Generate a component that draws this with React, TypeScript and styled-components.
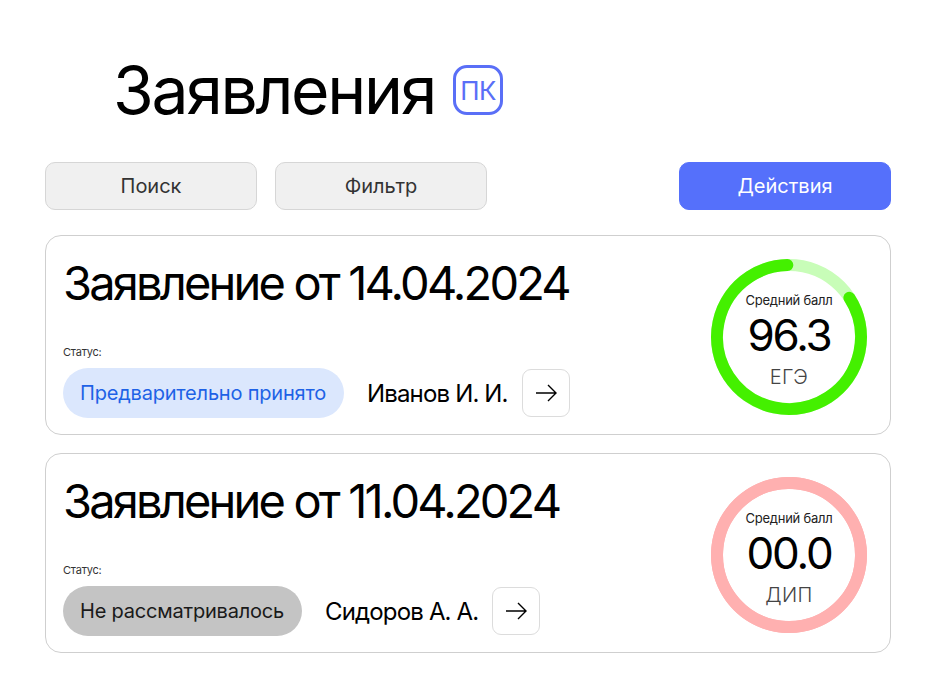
import React from "react";
import styled, { createGlobalStyle } from "styled-components";

const GlobalStyle = createGlobalStyle`
  html, body {
    margin: 0;
    padding: 0;
    background: #ffffff;
    font-family: Inter, "Liberation Sans", sans-serif;
  }
`;

const Page = styled.div`
  width: 940px;
  height: 700px;
  box-sizing: border-box;
  padding: 52px 49px 0 45px;
  display: flex;
  flex-direction: column;
`;

const Header = styled.div`
  display: flex;
  align-items: center;
  gap: 18px;
  padding-left: 68px;
  height: 76px;
`;

const Title = styled.h1`
  margin: 0;
  font-size: 66px;
  font-weight: 400;
  letter-spacing: -0.035em;
  color: #000;
`;

const Badge = styled.div`
  width: 44px;
  height: 44px;
  border: 3px solid #5a6ff7;
  border-radius: 14px;
  display: flex;
  align-items: center;
  justify-content: center;
  color: #5a6ff7;
  font-size: 26px;
  letter-spacing: -0.03em;
`;

const Toolbar = styled.div`
  display: flex;
  gap: 18px;
  margin-top: 34px;
`;

const ToolButton = styled.button<{ $primary?: boolean }>`
  width: 212px;
  height: 48px;
  border-radius: 10px;
  font-family: Inter, "Liberation Sans", sans-serif;
  font-size: 20px;
  cursor: pointer;
  border: 1px solid ${(p) => (p.$primary ? "#5570fb" : "#d6d6d6")};
  background: ${(p) => (p.$primary ? "#5570fb" : "#f0f0f0")};
  color: ${(p) => (p.$primary ? "#ffffff" : "#333333")};
  margin-left: ${(p) => (p.$primary ? "auto" : "0")};
`;

const List = styled.div`
  display: flex;
  flex-direction: column;
  gap: 18px;
  margin-top: 25px;
`;

const Card = styled.div`
  height: 200px;
  box-sizing: border-box;
  border: 1px solid #cfcfcf;
  border-radius: 16px;
  padding: 19px 22px 0 17px;
  display: flex;
  justify-content: space-between;
`;

const CardBody = styled.div`
  display: flex;
  flex-direction: column;
`;

const CardTitle = styled.h2`
  margin: 0;
  font-size: 47px;
  font-weight: 400;
  letter-spacing: -0.06em;
  color: #000;
  line-height: 56px;
`;

const StatusLabel = styled.div`
  margin-top: 34px;
  font-size: 11px;
  color: #333;
  letter-spacing: -0.02em;
`;

const StatusRow = styled.div`
  display: flex;
  align-items: center;
  gap: 23px;
  margin-top: 9px;
`;

const Pill = styled.div<{ $tone: "blue" | "gray" }>`
  height: 50px;
  padding: 0 18px 0 17px;
  border-radius: 25px;
  display: flex;
  align-items: center;
  font-size: 20px;
  letter-spacing: -0.01em;
  background: ${(p) => (p.$tone === "blue" ? "#dbe7fd" : "#c4c4c4")};
  color: ${(p) => (p.$tone === "blue" ? "#1e62e6" : "#1a1a1a")};
`;

const Person = styled.div`
  font-size: 24px;
  letter-spacing: -0.035em;
  color: #000;
  margin-right: -9px;
`;

const ArrowButton = styled.button`
  width: 48px;
  height: 48px;
  border: 1px solid #dcdcdc;
  border-radius: 9px;
  background: #fff;
  display: flex;
  align-items: center;
  justify-content: center;
  padding: 0;
  cursor: pointer;
`;

const Gauge = styled.div`
  position: relative;
  width: 158px;
  height: 158px;
  margin-top: 3px;
  align-self: flex-start;
`;

const GaugeSvg = styled.svg`
  position: absolute;
  inset: 0;
`;

const GaugeText = styled.div`
  position: absolute;
  inset: 0;
  padding-top: 6px;
  display: flex;
  flex-direction: column;
  align-items: center;
  justify-content: center;
`;

const GaugeLabel = styled.div`
  font-size: 13px;
  line-height: 16px;
  color: #222;
  letter-spacing: -0.02em;
`;

const GaugeValue = styled.div`
  font-size: 44px;
  line-height: 44px;
  margin-top: 5px;
  letter-spacing: -0.05em;
  color: #000;
`;

const GaugeUnit = styled.div`
  font-size: 20px;
  line-height: 22px;
  margin-top: 9px;
  font-weight: 300;
  color: #444;
  letter-spacing: 0.02em;
`;

const Arrow = () => (
  <svg width="24" height="24" viewBox="0 0 24 24" fill="none" stroke="#000" strokeWidth="1.4">
    <path d="M2 12h20M14 4l8 8-8 8" />
  </svg>
);

type Ring = { color: string; track: string; part: number };

const ScoreRing = ({ ring, value, unit }: { ring: Ring; value: string; unit: string }) => {
  const r = 72;
  const c = 2 * Math.PI * r;
  return (
    <Gauge>
      <GaugeSvg width="158" height="158" viewBox="0 0 158 158">
        <circle cx="79" cy="79" r={r} fill="none" stroke={ring.track} strokeWidth="12" />
        <circle
          cx="79"
          cy="79"
          r={r}
          fill="none"
          stroke={ring.color}
          strokeWidth="12"
          strokeLinecap="round"
          strokeDasharray={`${c * ring.part - 6} ${c}`}
          transform={`rotate(${-90 + 360 * (1 - ring.part) + 3} 79 79)`}
        />
      </GaugeSvg>
      <GaugeText>
        <GaugeLabel>Средний балл</GaugeLabel>
        <GaugeValue>{value}</GaugeValue>
        <GaugeUnit>{unit}</GaugeUnit>
      </GaugeText>
    </Gauge>
  );
};

const apps = [
  {
    date: "14.04.2024",
    status: "Предварительно принято",
    tone: "blue" as const,
    person: "Иванов И. И.",
    value: "96.3",
    unit: "ЕГЭ",
    ring: { color: "#44f000", track: "#c8fdb8", part: 0.85 },
  },
  {
    date: "11.04.2024",
    status: "Не рассматривалось",
    tone: "gray" as const,
    person: "Сидоров А. А.",
    value: "00.0",
    unit: "ДИП",
    ring: { color: "#ffb0b0", track: "#ffb0b0", part: 1 },
  },
];

const App = () => {
  return (
    <Page>
      <GlobalStyle />
      <Header>
        <Title>Заявления</Title>
        <Badge>ПК</Badge>
      </Header>
      <Toolbar>
        <ToolButton>Поиск</ToolButton>
        <ToolButton>Фильтр</ToolButton>
        <ToolButton $primary>Действия</ToolButton>
      </Toolbar>
      <List>
        {apps.map((a) => (
          <Card key={a.date}>
            <CardBody>
              <CardTitle>Заявление от {a.date}</CardTitle>
              <StatusLabel>Статус:</StatusLabel>
              <StatusRow>
                <Pill $tone={a.tone}>{a.status}</Pill>
                <Person>{a.person}</Person>
                <ArrowButton>
                  <Arrow />
                </ArrowButton>
              </StatusRow>
            </CardBody>
            <ScoreRing ring={a.ring} value={a.value} unit={a.unit} />
          </Card>
        ))}
      </List>
    </Page>
  );
};

export default App;
